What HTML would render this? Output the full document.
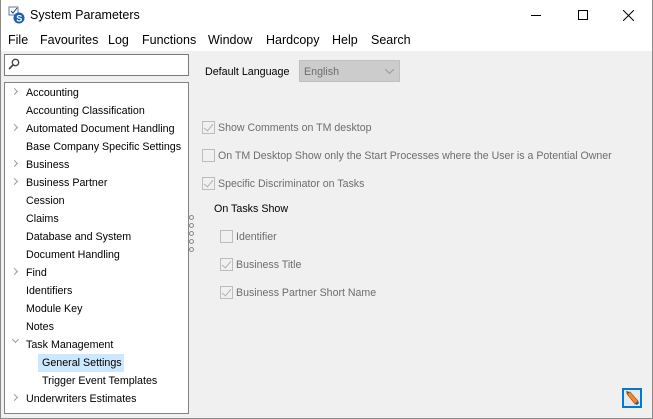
<!DOCTYPE html>
<html><head><style>
*{margin:0;padding:0;box-sizing:border-box}
body{width:653px;height:419px;overflow:hidden;background:#f0f0f0;font-family:"Liberation Sans",sans-serif;font-size:11px;color:#000;position:relative}
.win{position:absolute;left:0;top:0;width:653px;height:419px;border:1px solid #8a8a8a;border-top:none}
.title{position:absolute;left:0;top:0;width:653px;height:31px;background:#fff}
.title span{position:absolute;left:30px;top:8px;font-size:12.5px}
.menu{position:absolute;left:0;top:31px;width:653px;height:20px;background:#fff}
.menu span{position:absolute;top:2px;font-size:12.5px}
.search{position:absolute;left:4px;top:54px;width:185px;height:22px;background:#fff;border:1px solid #7a7a7a}
.tree{position:absolute;left:4px;top:82px;width:185px;height:332px;background:#fff;border:1px solid #828282}
.r{position:absolute;left:21px;font-size:10.7px;white-space:nowrap;margin-top:1px}
.ch{position:absolute;left:7px;width:5px;height:5px;border-right:1px solid #999;border-bottom:1px solid #999;transform:rotate(-45deg)}
.t{position:absolute;font-size:10.6px;white-space:nowrap;color:#6d6d6d;margin-top:2px}
.cb{position:absolute;width:13px;height:13px;border:1px solid #bcbcbc;background:#f0f0f0}
.cb.c::after{content:"";position:absolute;left:3px;top:0px;width:4px;height:8px;border-right:1px solid #b0b0b0;border-bottom:1px solid #b0b0b0;transform:rotate(40deg)}
.dot{position:absolute;left:189px;width:5px;height:5px;border:1px solid #888;border-radius:50%}
</style></head><body>
<div class="title">
<svg style="position:absolute;left:8px;top:6px" width="18" height="18"><rect x="1" y="1" width="9" height="8" fill="#fff" stroke="#5a7ba8"/><path d="M3 5l2 2 4-5" stroke="#345" fill="none"/><circle cx="11" cy="12" r="5.5" fill="#1a5fb4"/><text x="8.3" y="15.5" font-size="9" font-weight="bold" fill="#fff" font-family="Liberation Sans">S</text></svg>
<span>System Parameters</span>
<div style="position:absolute;left:531px;top:15px;width:10px;height:1px;background:#000"></div>
<div style="position:absolute;left:578px;top:10px;width:10px;height:10px;border:1px solid #000"></div>
<svg style="position:absolute;left:623px;top:10px" width="11" height="11"><path d="M0 0L11 11M11 0L0 11" stroke="#000"/></svg>
</div>
<div class="menu">
<span style="left:8px">File</span><span style="left:40px">Favourites</span><span style="left:108px">Log</span><span style="left:142px">Functions</span><span style="left:208px">Window</span><span style="left:266px">Hardcopy</span><span style="left:332px">Help</span><span style="left:371px">Search</span>
</div>
<div class="search"><svg style="position:absolute;left:3px;top:3px" width="12" height="12"><circle cx="7.5" cy="4.5" r="3.2" fill="none" stroke="#444" stroke-width="1.3"/><path d="M5 7L1 11" stroke="#444" stroke-width="1.6"/></svg></div>
<div class="tree">
<i class="ch" style="top:6px"></i><div class="r" style="top:3px">Accounting</div>
<div class="r" style="top:21px">Accounting Classification</div>
<i class="ch" style="top:42px"></i><div class="r" style="top:39px">Automated Document Handling</div>
<div class="r" style="top:57px">Base Company Specific Settings</div>
<i class="ch" style="top:78px"></i><div class="r" style="top:75px">Business</div>
<i class="ch" style="top:96px"></i><div class="r" style="top:93px">Business Partner</div>
<div class="r" style="top:111px">Cession</div>
<div class="r" style="top:129px">Claims</div>
<div class="r" style="top:147px">Database and System</div>
<div class="r" style="top:165px">Document Handling</div>
<i class="ch" style="top:186px"></i><div class="r" style="top:183px">Find</div>
<div class="r" style="top:201px">Identifiers</div>
<div class="r" style="top:219px">Module Key</div>
<div class="r" style="top:237px">Notes</div>
<i class="ch" style="top:254px;left:8px;transform:rotate(45deg)"></i><div class="r" style="top:255px">Task Management</div>
<div style="position:absolute;left:33px;top:271px;width:86px;height:18px;background:#cce8ff"></div>
<div class="r" style="top:273px;left:37px">General Settings</div>
<div class="r" style="top:291px;left:37px">Trigger Event Templates</div>
<i class="ch" style="top:312px"></i><div class="r" style="top:309px">Underwriters Estimates</div>
</div>
<div class="dot" style="top:215px"></div><div class="dot" style="top:223px"></div><div class="dot" style="top:231px"></div><div class="dot" style="top:239px"></div><div class="dot" style="top:247px"></div>
<div style="position:absolute;left:205px;top:66px;font-size:10.7px">Default Language</div>
<div style="position:absolute;left:299px;top:60px;width:101px;height:22px;background:#cccccc;border:1px solid #bfbfbf;color:#6d6d6d;padding:5px 0 0 4px;font-size:10.7px">English<svg style="position:absolute;left:85px;top:8px" width="9" height="5"><path d="M0 0l4.5 4.5L9 0" stroke="#999" fill="none"/></svg></div>
<div class="cb c" style="left:202px;top:121px"></div><div class="t" style="left:218px;top:120px">Show Comments on TM desktop</div>
<div class="cb" style="left:202px;top:149px"></div><div class="t" style="left:218px;top:148px">On TM Desktop Show only the Start Processes where the User is a Potential Owner</div>
<div class="cb c" style="left:202px;top:177px"></div><div class="t" style="left:218px;top:176px">Specific Discriminator on Tasks</div>
<div style="position:absolute;left:214px;top:203px;font-size:10.7px">On Tasks Show</div>
<div class="cb" style="left:220px;top:230px"></div><div class="t" style="left:236px;top:229px">Identifier</div>
<div class="cb c" style="left:220px;top:258px"></div><div class="t" style="left:236px;top:257px">Business Title</div>
<div class="cb c" style="left:220px;top:286px"></div><div class="t" style="left:236px;top:285px">Business Partner Short Name</div>
<div style="position:absolute;left:622px;top:388px;width:20px;height:20px;border:2px solid #0078d7;background:#e8e8e8">
<svg width="16" height="16"><path d="M3 4L6 2L14 11L11 14Z" fill="#f08a24" stroke="#a0522d" stroke-width=".7"/><path d="M3 4L2 1L6 2Z" fill="#555"/><path d="M11 14L14 11L15 13L13 15Z" fill="#2a5db0"/></svg></div>
<div class="win"></div>
</body></html>
